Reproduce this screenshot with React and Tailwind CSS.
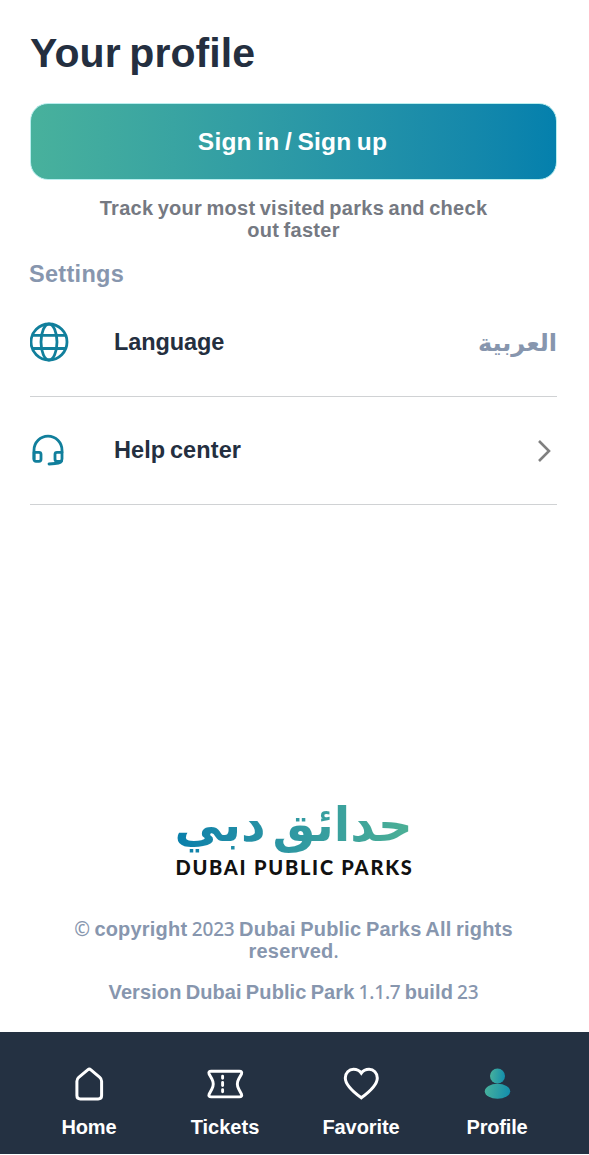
import React, { useState } from 'react';


const GlobeIcon = () => (
  <svg className="w-10 h-10" viewBox="0 0 40 40" fill="none" stroke="#117f9c" strokeWidth="2.8">
    <circle cx="19" cy="20" r="18" />
    <ellipse cx="19" cy="20" rx="8" ry="18" />
    <path d="M2.500 13.300h33M2.500 26.500h33" />
  </svg>
);

const HeadsetIcon = () => (
  <svg className="w-10 h-10" viewBox="0 0 40 40" fill="none" stroke="#117f9c" strokeWidth="2.800" strokeLinecap="round" strokeLinejoin="round">
    <path d="M4 28V19.200a14 14 0 0 1 28 0v8.500c0 3.200-3 4.800-7 4.800l-6 .500" />
    <path d="M4 21.300h5c1.400 0 2 .7 2 2v5c0 1.300-.6 2-2 2h-3c-1.300 0-2-.7-2-2z" />
    <path d="M32 21.300h-5c-1.400 0-2 .7-2 2v5c0 1.300.6 2 2 2h4.500" />
  </svg>
);

const HomeIcon = () => (
  <svg className="w-10 h-10" viewBox="0 0 40 40" fill="none" stroke="#fff" strokeWidth="3" strokeLinejoin="round">
    <path d="M18.700 5.800 9.700 13.300Q7.900 14.800 7.900 17.200V31.500Q7.900 34.900 11.300 34.900H29.200Q32.600 34.900 32.600 31.500V17.200Q32.600 14.800 30.800 13.300L21.900 5.800Q20.300 4.500 18.700 5.800Z" />
  </svg>
);

const TicketIcon = () => (
  <svg className="w-10 h-10" viewBox="0 0 40 40" fill="none" stroke="#fff" strokeWidth="2.900" strokeLinejoin="round" strokeLinecap="round">
    <path d="M6.200 7.300H34.400Q37.500 7.300 36.500 10L33.700 15Q31 20 33.700 25L36.500 30.200Q37.500 32.900 34.400 32.900H6.200Q3.100 32.900 4.100 30.200L6.900 25Q9.600 20 6.900 15L4.100 10Q3.100 7.300 6.200 7.300Z" />
    <path d="M17.600 12.300v2M17.600 18.400v3.200M17.600 25.700v2" />
  </svg>
);

const HeartIcon = () => (
  <svg className="w-10 h-10" viewBox="0 0 40 40" fill="none" stroke="#fff" strokeWidth="3" strokeLinejoin="miter">
    <path d="M20.300 33.800C13 28.500 4.300 21.500 4.300 14C4.300 8.800 8 5.300 12.500 5.300C15.800 5.300 18.500 6.600 20.300 9.200C22.100 6.600 24.800 5.300 28.100 5.300C32.600 5.300 36.300 8.800 36.300 14C36.300 21.500 27.600 28.500 20.300 33.800Z" />
  </svg>
);

const ProfileIcon = () => (
  <svg className="w-10 h-10" viewBox="0 0 40 40">
    <defs>
      <linearGradient id="person" x1="0" x2="1" y1="0.2" y2="0.3">
        <stop offset="0" stopColor="#48b19c" />
        <stop offset="1" stopColor="#148fac" />
      </linearGradient>
    </defs>
    <circle cx="20.500" cy="12" r="7.500" fill="url(#person)" />
    <ellipse cx="20.500" cy="27.300" rx="12.700" ry="7.500" fill="url(#person)" />
  </svg>
);

const tabs = [
  { name: "Home", icon: <HomeIcon />, label: "tracking-[-0.1px]" },
  { name: "Tickets", icon: <TicketIcon />, label: "tracking-[0px]" },
  { name: "Favorite", icon: <HeartIcon />, label: "tracking-[-0.1px]" },
  { name: "Profile", icon: <ProfileIcon />, label: "tracking-[-0.2px]" },
];

// digits and symbols are set in a lighter face than the words around them
const Num = ({ children }) => (
  <span className="font-['Noto_Sans'] font-medium text-[19px] tracking-[-0.2px]">{children}</span>
);

const App = () => {
  const [activeTab, setActiveTab] = useState("Profile");

  return (
    <div className="h-[1154px] flex flex-col bg-white text-[#242f40] font-['Liberation_Sans',sans-serif] font-bold">
      <main className="flex-1 flex flex-col pl-[30px] pr-8">
        <h1 className="mt-[29px] h-[47px] text-[41px] leading-[48px] tracking-[0.1px] [word-spacing:-3px] whitespace-nowrap">Your profile</h1>

        <button className="mt-[27px] h-[77px] w-full rounded-[18px] border border-[#b9eeee] bg-linear-to-r from-[#48b19c] to-[#0480ad] bg-origin-border text-white text-[24.500px] tracking-[0.2px] [word-spacing:-1.500px] pt-px pr-0.5 cursor-pointer">
          Sign in / Sign up
        </button>

        <p className="mt-[17px] text-center text-[20px] leading-[22px] tracking-[0.28px] [word-spacing:-1.500px] text-[#757982]">
          Track your most visited parks and check<br />out faster
        </p>

        <h2 className="mt-[19px] h-7 -ml-px text-[23.500px] leading-7 tracking-[0.300px] text-[#8796ae]">Settings</h2>

        <div className="h-[109px] flex items-center border-b border-[#d0d2d4]">
          <GlobeIcon />
          <span className="ml-11 mt-px text-[23.500px] tracking-[-0.1px]">Language</span>
          <span className="ml-auto mt-0.5 text-[24px] font-['DejaVu_Sans',sans-serif] text-[#8796ae]" dir="rtl">العربية</span>
        </div>

        <div className="h-[108px] flex items-center border-b border-[#d0d2d4]">
          <HeadsetIcon />
          <span className="ml-11 text-[23.500px] tracking-[0.1px] [word-spacing:-2px]">Help center</span>
          <svg className="ml-auto mr-[3px] w-[18px] h-6" viewBox="0 0 18 24" fill="none" stroke="#808080" strokeWidth="2.600">
            <path d="M3 2 13 12 3 22" />
          </svg>
        </div>

        <div className="mt-auto flex flex-col items-center">
          <div className="h-[54px] text-[48px] leading-[46px] [word-spacing:-10px] whitespace-nowrap font-['DejaVu_Sans',sans-serif] text-transparent bg-clip-text bg-linear-to-r from-[#087fab] to-[#4cb095]" dir="rtl">حدائق دبي</div>
          <div className="h-[26px] pl-0.5 text-[20px] leading-[24px] tracking-[1.750px] whitespace-nowrap font-['Lato',sans-serif] font-black text-[#111]">DUBAI PUBLIC PARKS</div>
        </div>

        <p className="mt-[37px] text-center text-[20px] leading-[22px] tracking-[0.2px] [word-spacing:-1.200px] text-[#8796ae] whitespace-nowrap">
          <Num>©</Num> copyright <Num>2023</Num> Dubai Public Parks All rights<br />reserved<Num>.</Num>
        </p>
        <p className="mt-[19px] mb-[29px] text-center text-[20px] leading-[22px] tracking-[0.1px] [word-spacing:-1.500px] text-[#8796ae] whitespace-nowrap">
          Version Dubai Public Park <Num>1.1.7</Num> build <Num>23</Num>
        </p>
      </main>

      <nav className="h-[122px] bg-[#243142] grid grid-cols-4 pl-[21px] pr-6 pt-8">
        {tabs.map((tab) => (
          <button key={tab.name} className="flex flex-col items-center text-white cursor-pointer" onClick={() => setActiveTab(tab.name)} aria-current={activeTab === tab.name}>
            {tab.icon}
            <span className={`mt-[11px] text-[20px] leading-6 ${tab.label}`}>{tab.name}</span>
          </button>
        ))}
      </nav>
    </div>
  );
};

export default App;
